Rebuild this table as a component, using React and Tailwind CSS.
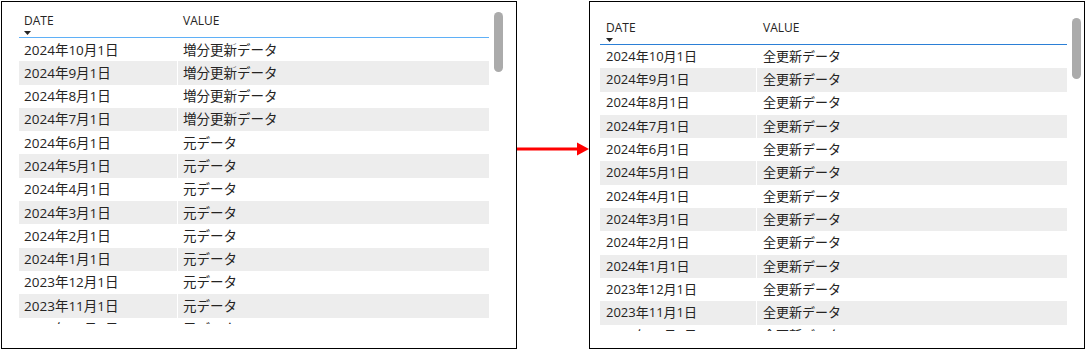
const font = { fontFamily: "'Open Sans', 'Noto Sans CJK JP', sans-serif" };

const dates = [
  "2024年10月1日", "2024年9月1日", "2024年8月1日", "2024年7月1日",
  "2024年6月1日", "2024年5月1日", "2024年4月1日", "2024年3月1日",
  "2024年2月1日", "2024年1月1日", "2023年12月1日", "2023年11月1日",
  "2023年10月1日",
];

const before = dates.map((d, i) => ({ date: d, value: i < 4 ? "増分更新データ" : "元データ" }));
const after = dates.map((d) => ({ date: d, value: "全更新データ" }));

function SortArrow() {
  return (
    <svg width="7" height="4" viewBox="0 0 7 4" className="mt-[3px]">
      <polygon points="0,0 7,0 3.5,4" fill="#252423" />
    </svg>
  );
}

function Table({ rows, lineColor, dateW, textSize, bodyH, padL }) {
  return (
    <div className="w-full">
      <div className="flex h-[27px] border-b" style={{ borderColor: lineColor }}>
        <div className={`${dateW} ${padL} pt-[3px] flex flex-col text-[12px] leading-[14px] text-[#252423]`}>
          <span>DATE</span>
          <SortArrow />
        </div>
        <div className={`${padL} pt-[3px] text-[12px] leading-[14px] text-[#252423]`}>VALUE</div>
      </div>
      <div className="overflow-hidden" style={{ height: bodyH }}>
        {rows.map((r, i) => (
          <div key={i} className={`flex h-[23.3px] items-center ${textSize} text-[#252423] ${i % 2 ? "bg-[#ededed]" : "bg-white"}`}>
            <div className={`${dateW} ${padL} h-full flex items-center border-r border-white whitespace-nowrap`}>{r.date}</div>
            <div className={`${padL} whitespace-nowrap`}>{r.value}</div>
          </div>
        ))}
      </div>
    </div>
  );
}

export default function App() {
  return (
    <div className="w-[1092px] h-[351px] bg-white flex pt-[1px] pl-[1px]" style={font}>
      <div className="w-[516px] h-[348px] border border-black flex">
        <div className="ml-[17px] mt-[9px] w-[470px]">
          <Table rows={before} lineColor="#5fb0f7" dateW="w-[159px]" textSize="text-[13.5px]" bodyH={286} padL="pl-[5px]" />
        </div>
        <div className="ml-[5px] mt-[10px] w-[9px] h-[60px] rounded-full bg-[#ababab]" />
      </div>

      <svg width="72" height="14" viewBox="0 0 72 14" className="mt-[141px] shrink-0">
        <rect x="0" y="5.5" width="62" height="3" fill="#ff0000" />
        <polygon points="60,0.5 72,7 60,13.5" fill="#ff0000" />
      </svg>

      <div className="w-[496px] h-[348px] border border-black flex">
        <div className="ml-[10px] mt-[16px] w-[467px]">
          <Table rows={after} lineColor="#2b7fd6" dateW="w-[157px]" textSize="text-[13px]" bodyH={286} padL="pl-[6px]" />
        </div>
        <div className="ml-[5px] mt-[16px] w-[9px] h-[61px] rounded-full bg-[#ababab]" />
      </div>
    </div>
  );
}
